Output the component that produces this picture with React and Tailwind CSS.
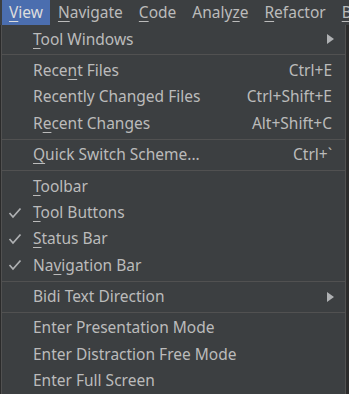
const font = { fontFamily: '"Noto Sans", "Open Sans", sans-serif' };

const U = ({ children }) => <span className="underline underline-offset-[3px] decoration-1">{children}</span>;

const Check = () => (
  <svg width="14" height="12" viewBox="0 0 14 12" className="block">
    <path d="M1.5 6 L5 10 L12.5 1.5" fill="none" stroke="#afb1b3" strokeWidth="1.7" />
  </svg>
);

const Arrow = () => (
  <svg width="7" height="10" viewBox="0 0 7 10" className="block">
    <path d="M0 0 L7 5 L0 10 Z" fill="#afb1b3" />
  </svg>
);

const Item = ({ label, shortcut, checked, submenu }) => (
  <div className="flex h-[26.4px] items-center pl-[6px] pr-[13px] whitespace-nowrap">
    <div className="w-[25px] flex items-center">{checked && <Check />}</div>
    <div className="flex-1 text-[15.5px] text-[#bbbbbb]">{label}</div>
    {shortcut && <div className="text-[15.5px] text-[#bbbbbb]">{shortcut}</div>}
    {submenu && <div className="-mr-[2px]"><Arrow /></div>}
  </div>
);

const Sep = () => <div className="my-[2px] h-px bg-[#515151]" />;

export default function App() {
  return (
    <div className="w-[349px] h-[394px] bg-[#3c3f41] overflow-hidden" style={font}>
      {/* Menu bar */}
      <div className="flex h-[25px] items-stretch text-[15.5px] text-[#bbbbbb] whitespace-nowrap">
        <div className="ml-[2px] px-[7px] flex items-center bg-[#4b6eaf] text-[#dddddd]">
          <span><U>V</U>iew</span>
        </div>
        <div className="px-[8px] flex items-center"><span><U>N</U>avigate</span></div>
        <div className="px-[8px] flex items-center"><span><U>C</U>ode</span></div>
        <div className="px-[8px] flex items-center"><span>Analy<U>z</U>e</span></div>
        <div className="px-[8px] flex items-center"><span><U>R</U>efactor</span></div>
        <div className="px-[8px] flex items-center"><span><U>B</U>uild</span></div>
      </div>
      {/* Popup */}
      <div className="flex">
        <div className="w-[1px] bg-[#2b2b2b]" />
        <div className="w-[345px] border border-t-0 border-[#515151] bg-[#3c3f41] pt-[1px]">
          <Item label={<><U>T</U>ool Windows</>} submenu />
          <Sep />
          <Item label={<>Rece<U>n</U>t Files</>} shortcut="Ctrl+E" />
          <Item label="Recently Changed Files" shortcut="Ctrl+Shift+E" />
          <Item label={<>R<U>e</U>cent Changes</>} shortcut="Alt+Shift+C" />
          <Sep />
          <Item label={<><U>Q</U>uick Switch Scheme...</>} shortcut="Ctrl+`" />
          <Sep />
          <Item label={<><U>T</U>oolbar</>} />
          <Item label={<><U>T</U>ool Buttons</>} checked />
          <Item label={<><U>S</U>tatus Bar</>} checked />
          <Item label={<>Na<U>v</U>igation Bar</>} checked />
          <Sep />
          <Item label="Bidi Text Direction" submenu />
          <Sep />
          <Item label="Enter Presentation Mode" />
          <Item label="Enter Distraction Free Mode" />
          <Item label="Enter Full Screen" />
        </div>
        <div className="flex-1 bg-[#2b2b2b]" />
      </div>
    </div>
  );
}
